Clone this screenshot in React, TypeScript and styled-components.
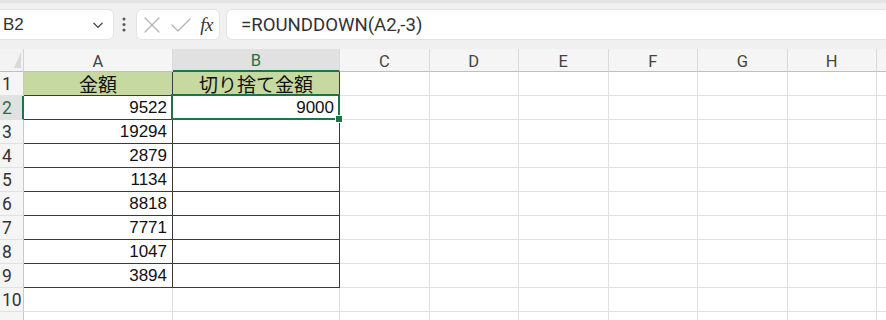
import React from 'react'
import styled, { createGlobalStyle, css } from 'styled-components'

const GlobalStyle = createGlobalStyle`
  html, body {
    margin: 0;
    padding: 0;
    background: #ffffff;
    overflow: hidden;
  }
  body {
    font-family: "Liberation Sans", "Noto Sans CJK JP", sans-serif;
  }
`

const Page = styled.div`
  width: 886px;
  height: 320px;
  overflow: hidden;
  display: flex;
  flex-direction: column;
`

const Toolbar = styled.div`
  height: 49px;
  flex: none;
  box-sizing: border-box;
  background: #f0f0f0;
  border-top: 3px solid #e4e4e4;
  padding-top: 6px;
  display: flex;
  align-items: flex-start;
  gap: 6px;
`

const NameBox = styled.div`
  margin-left: -8px;
  width: 122px;
  height: 31px;
  box-sizing: border-box;
  background: #fff;
  border-radius: 6px;
  border: 1px solid #e3e3e3;
  display: flex;
  align-items: center;
  justify-content: space-between;
  padding: 0 8px 0 10px;
  font-size: 17px;
  color: #333;
`

const Dots = styled.svg`
  width: 6px;
  height: 31px;
  flex: none;
  margin: 0 3px 0 1px;
`

const ActionBox = styled.div`
  width: 84px;
  height: 31px;
  box-sizing: border-box;
  background: #fff;
  border-radius: 6px;
  border: 1px solid #e3e3e3;
  display: flex;
  align-items: center;
  justify-content: space-between;
  padding: 0 6px 0 5px;
`

const Fx = styled.span`
  font-family: "Liberation Serif", "DejaVu Serif", serif;
  font-style: italic;
  font-size: 19px;
  color: #333;
  letter-spacing: -0.5px;
`

const FormulaBox = styled.div`
  flex: 1;
  height: 31px;
  box-sizing: border-box;
  background: #fff;
  border-radius: 6px 0 0 6px;
  border: 1px solid #e3e3e3;
  border-right: none;
  display: flex;
  align-items: center;
  padding-left: 14px;
  font-family: "Roboto", "Liberation Sans", sans-serif;
  font-size: 18.6px;
  color: #333;
`

const Sheet = styled.div`
  display: grid;
  grid-template-columns: 24px 149px 167px repeat(7, 89.5px);
  grid-template-rows: 23px repeat(11, 24px);
`

const Corner = styled.div`
  background: #f3f3f3;
  border-right: 1px solid #d4d4d4;
  border-bottom: 1px solid #bfbfbf;
  position: relative;
  &::after {
    content: '';
    position: absolute;
    right: 2px;
    bottom: 3px;
    width: 0;
    height: 0;
    border-left: 7px solid transparent;
    border-bottom: 16px solid #d9d9d9;
  }
`

const ColHead = styled.div<{ $active?: boolean }>`
  background: ${(p) => (p.$active ? '#e1e1e1' : '#f5f5f5')};
  color: ${(p) => (p.$active ? '#217346' : '#444')};
  border-right: 1px solid #dadada;
  border-bottom: ${(p) => (p.$active ? '2px solid #217346' : '1px solid #bfbfbf')};
  display: flex;
  align-items: center;
  justify-content: center;
  font-family: "Roboto", "Liberation Sans", sans-serif;
  font-size: 16.5px;
  padding-top: 2px;
  box-sizing: border-box;
`

const RowHead = styled.div<{ $active?: boolean }>`
  background: ${(p) => (p.$active ? '#e1e1e1' : '#f5f5f5')};
  color: ${(p) => (p.$active ? '#217346' : '#333')};
  border-right: ${(p) => (p.$active ? '2px solid #217346' : '1px solid #c8c8c8')};
  border-bottom: 1px solid #e1e1e1;
  display: flex;
  align-items: center;
  justify-content: flex-start;
  padding-left: 2px;
  box-sizing: border-box;
  font-family: "Roboto", "Liberation Sans", sans-serif;
  font-size: 17.5px;
  white-space: nowrap;
`

const Cell = styled.div<{ $table?: boolean; $header?: boolean; $selected?: boolean }>`
  box-sizing: border-box;
  border-right: 1px solid #e1e1e1;
  border-bottom: 1px solid #e1e1e1;
  display: flex;
  align-items: center;
  justify-content: flex-end;
  padding-right: 5px;
  font-size: 17px;
  color: #111;
  position: relative;
  ${(p) =>
    p.$table &&
    css`
      border-right: 1px solid #3a3a3a;
      border-bottom: 1px solid #3a3a3a;
    `}
  ${(p) =>
    p.$header &&
    css`
      background: #c6d9a0;
      justify-content: center;
      padding-right: 0;
      font-family: "Noto Sans CJK JP", sans-serif;
      font-size: 19px;
    `}
  ${(p) =>
    p.$selected &&
    css`
      &::after {
        content: '';
        position: absolute;
        left: -2px;
        top: -2px;
        right: -1px;
        bottom: -1px;
        border: 2px solid #217346;
        pointer-events: none;
      }
      &::before {
        content: '';
        position: absolute;
        right: -4px;
        bottom: -4px;
        width: 6px;
        height: 6px;
        background: #217346;
        border: 1px solid #fff;
        z-index: 2;
      }
    `}
`

// the ninth column only peeks in at the right edge, so it shows no letter
const columns = ['A', 'B', 'C', 'D', 'E', 'F', 'G', 'H', '']
const amounts = ['9522', '19294', '2879', '1134', '8818', '7771', '1047', '3894']

export default function App() {
  const rows = Array.from({ length: 11 }, (_, i) => i + 1)
  return (
    <Page>
      <GlobalStyle />
      <Toolbar>
        <NameBox>
          <span>B2</span>
          <svg width="14" height="14" viewBox="0 0 24 24" fill="none" stroke="#444" strokeWidth="2.2" strokeLinecap="round" strokeLinejoin="round">
            <path d="m5 9 7 7 7-7" />
          </svg>
        </NameBox>
        <Dots viewBox="0 0 6 31">
          <circle cx="3" cy="10" r="1.5" fill="#555" />
          <circle cx="3" cy="15.5" r="1.5" fill="#555" />
          <circle cx="3" cy="21" r="1.5" fill="#555" />
        </Dots>
        <ActionBox>
          <svg width="20" height="20" viewBox="0 0 20 20" fill="none" stroke="#b3b3b3" strokeWidth="1.3" strokeLinecap="round">
            <path d="M3 3 17 17M17 3 3 17" />
          </svg>
          <svg width="22" height="20" viewBox="0 0 22 20" fill="none" stroke="#b3b3b3" strokeWidth="1.3" strokeLinecap="round" strokeLinejoin="round">
            <path d="M2 10 8 16 20 4" />
          </svg>
          <Fx>fx</Fx>
        </ActionBox>
        <FormulaBox>=ROUNDDOWN(A2,-3)</FormulaBox>
      </Toolbar>
      <Sheet>
        <Corner />
        {columns.map((c, i) => (
          <ColHead key={i} $active={c === 'B'}>
            {c}
          </ColHead>
        ))}
        {rows.map((r) => (
          <React.Fragment key={r}>
            <RowHead $active={r === 2}>{r <= 10 ? r : ''}</RowHead>
            {columns.map((c, i) => {
              const inTable = r <= 9 && (c === 'A' || c === 'B')
              let text = ''
              if (r === 1 && c === 'A') text = '金額'
              if (r === 1 && c === 'B') text = '切り捨て金額'
              if (r >= 2 && r <= 9 && c === 'A') text = amounts[r - 2]
              if (r === 2 && c === 'B') text = '9000'
              return (
                <Cell
                  key={i}
                  $table={inTable}
                  $header={inTable && r === 1}
                  $selected={r === 2 && c === 'B'}
                >
                  {text}
                </Cell>
              )
            })}
          </React.Fragment>
        ))}
      </Sheet>
    </Page>
  )
}
